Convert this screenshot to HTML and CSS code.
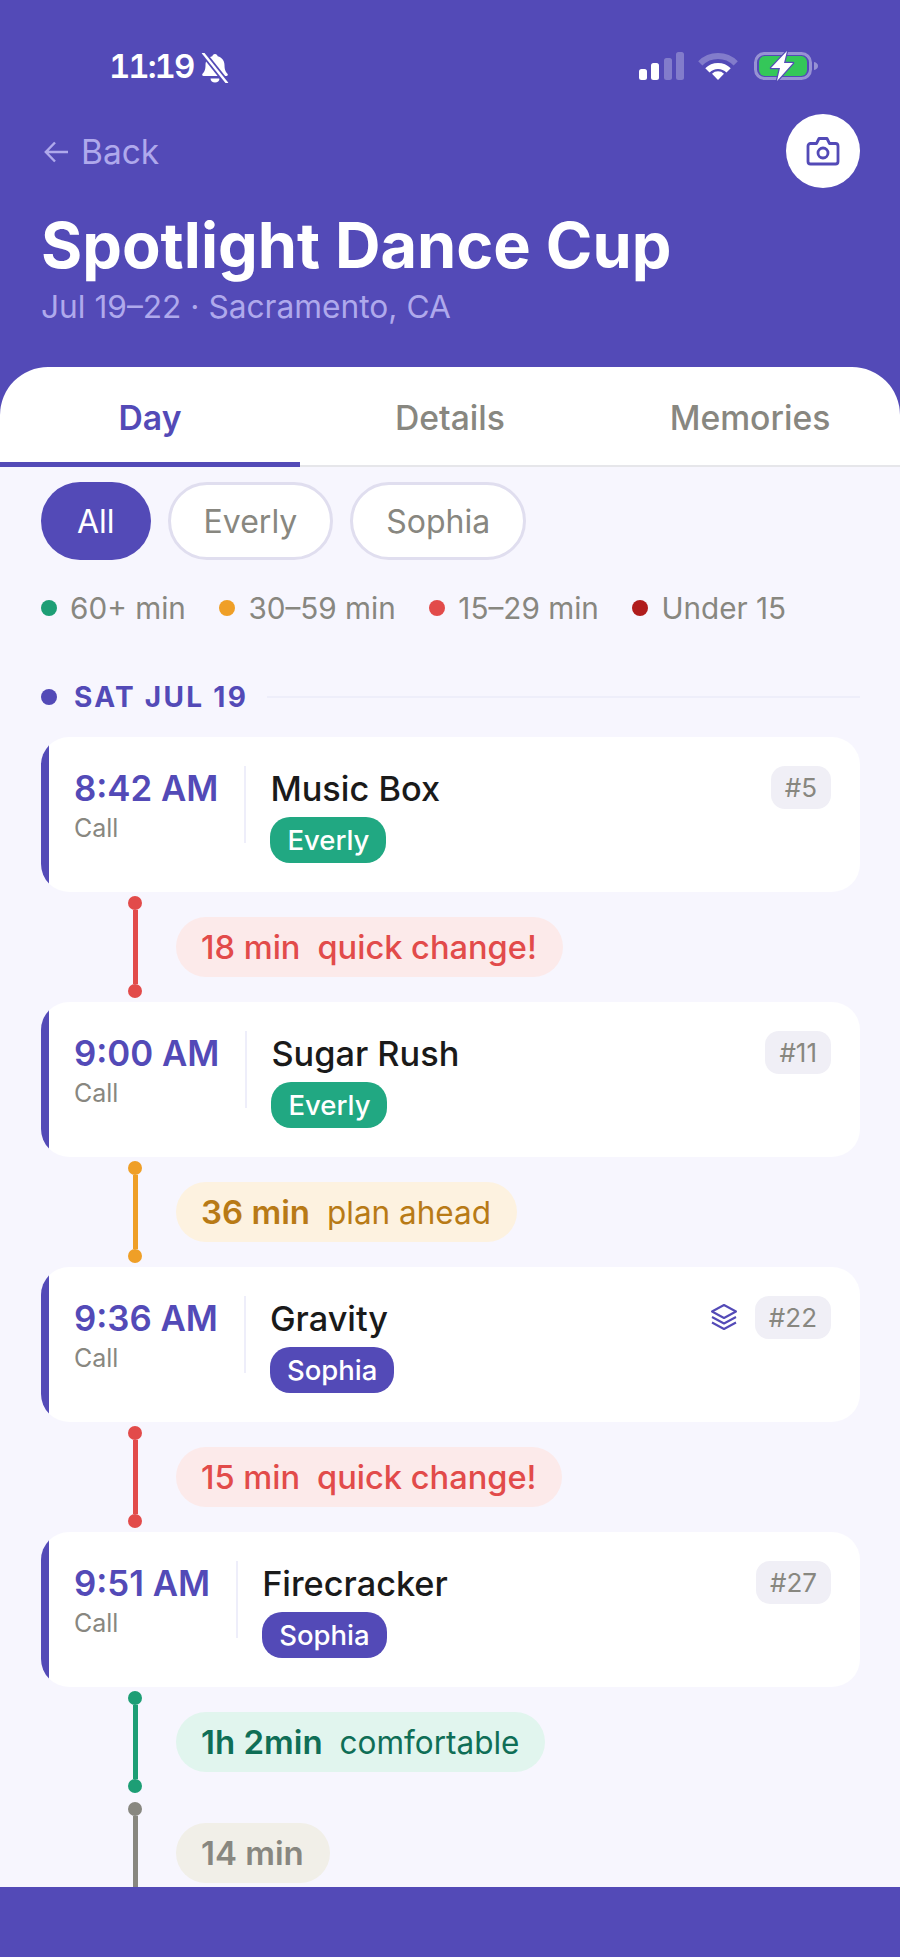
FILE: index.html
```html
<!DOCTYPE html>
<html lang="en">
<head>
    <meta charset="UTF-8">
    <meta name="viewport" content="width=device-width, initial-scale=1.0">
    <title>Spotlight Dance Cup</title>
    <link rel="stylesheet" href="styles.css">
</head>
<body>
    <div class="app">
        <header class="header">
            <div class="status-bar">
                <div class="status-left">
                    <span class="clock">11:19</span>
                    <svg class="bell" viewBox="0 0 30 30" width="30" height="30">
                        <path d="M15 1c1.500 0 2.500 1 2.700 2.300 4.300 1.100 6.800 4.500 6.800 8.900 0 5 1.500 6.800 3 8.600.7.900.2 2.200-1.100 2.200H3.600c-1.300 0-1.800-1.300-1.100-2.200 1.500-1.800 3-3.600 3-8.600 0-4.400 2.500-7.800 6.800-8.900C12.500 2 13.500 1 15 1z" fill="#fff"/>
                        <path d="M10.500 25.500h9c0 2.400-2 4-4.500 4s-4.500-1.600-4.500-4z" fill="#fff"/>
                        <path d="M3 0l24 30" stroke="#534ab7" stroke-width="6"/>
                        <path d="M3 0l24 30" stroke="#fff" stroke-width="2.400" stroke-linecap="round"/>
                    </svg>
                </div>
                <div class="status-right">
                    <svg viewBox="0 0 46 28" width="46" height="28">
                        <rect x="0" y="17" width="8" height="11" rx="2.500" fill="#fff"/>
                        <rect x="12" y="11" width="8" height="17" rx="2.500" fill="#fff"/>
                        <rect x="25" y="6" width="8" height="22" rx="2.500" fill="#fff" opacity=".28"/>
                        <rect x="37" y="0" width="8" height="28" rx="2.500" fill="#fff" opacity=".28"/>
                    </svg>
                    <svg viewBox="0 0 40 28" width="40" height="28">
                        <path d="M2.300 11.300A25 25 0 0 1 37.700 11.300" fill="none" stroke="#fff" stroke-width="6" opacity=".28"/>
                        <path d="M9.400 18.400A15 15 0 0 1 30.600 18.400" fill="none" stroke="#fff" stroke-width="6"/>
                        <path d="M20 28l-6-6.200a8.500 8.500 0 0 1 12 0z" fill="#fff"/>
                    </svg>
                    <svg class="battery" viewBox="0 0 66 32" width="66" height="32">
                        <rect x="2.500" y="3.500" width="55" height="25" rx="9" fill="none" stroke="#fff" stroke-width="3" opacity=".4"/>
                        <rect x="6" y="6" width="48" height="20" rx="6" fill="#34c759"/>
                        <path d="M61 12c2.500.5 4 2 4 4s-1.500 3.500-4 4z" fill="#fff" opacity=".4"/>
                        <path d="M34 1L18 18h9l-3 13 16-18h-9z" fill="#fff" stroke="#534ab7" stroke-width="2.500" stroke-linejoin="round" paint-order="stroke"/>
                    </svg>
                </div>
            </div>

            <div class="nav-row">
                <a class="back">
                    <svg viewBox="0 0 26 26" width="26" height="26">
                        <path d="M24 13H2M11 3.500L1.800 13l9.200 9.500" fill="none" stroke="#afa9ec" stroke-width="2.400"/>
                    </svg>
                    Back
                </a>
                <div class="camera-btn">
                    <svg viewBox="0 0 34 30" width="34" height="30">
                        <path d="M4.500 7.500h6l2.500-5h8l2.500 5h6a2.500 2.500 0 0 1 2.500 2.500v15.500a2.500 2.500 0 0 1-2.500 2.500h-25A2.500 2.500 0 0 1 2 25.500V10a2.500 2.500 0 0 1 2.500-2.500z" fill="none" stroke="#534ab7" stroke-width="2.800" stroke-linejoin="round"/>
                        <circle cx="17" cy="17" r="5" fill="none" stroke="#534ab7" stroke-width="2.800"/>
                    </svg>
                </div>
            </div>

            <h1 class="title">Spotlight Dance Cup</h1>
            <div class="subtitle">Jul 19–22 · Sacramento, CA</div>

            <nav class="tabs">
                <div class="tab active">Day</div>
                <div class="tab">Details</div>
                <div class="tab">Memories</div>
            </nav>
        </header>

        <main class="content">
            <div class="pills">
                <div class="pill selected">All</div>
                <div class="pill">Everly</div>
                <div class="pill">Sophia</div>
            </div>

            <div class="legend">
                <div class="legend-item"><span class="dot green"></span>60+ min</div>
                <div class="legend-item"><span class="dot orange"></span>30–59 min</div>
                <div class="legend-item"><span class="dot red"></span>15–29 min</div>
                <div class="legend-item"><span class="dot darkred"></span>Under 15</div>
            </div>

            <div class="date-row">
                <span class="dot purple"></span>
                <span class="date-label">SAT JUL 19</span>
                <span class="date-line"></span>
            </div>

            <div class="card">
                <div class="time-col">
                    <div class="time">8:42 AM</div>
                    <div class="call">Call</div>
                </div>
                <div class="info">
                    <div class="name">Music Box</div>
                    <span class="badge everly">Everly</span>
                </div>
                <div class="tag">#5</div>
            </div>

            <div class="gap">
                <div class="connector red"><i></i><b></b><i></i></div>
                <div class="chip chip-red"><span class="mins">18 min</span><span class="note">quick change!</span></div>
            </div>

            <div class="card">
                <div class="time-col">
                    <div class="time">9:00 AM</div>
                    <div class="call">Call</div>
                </div>
                <div class="info">
                    <div class="name">Sugar Rush</div>
                    <span class="badge everly">Everly</span>
                </div>
                <div class="tag">#11</div>
            </div>

            <div class="gap">
                <div class="connector orange"><i></i><b></b><i></i></div>
                <div class="chip chip-orange"><span class="mins">36 min</span><span class="note">plan ahead</span></div>
            </div>

            <div class="card">
                <div class="time-col">
                    <div class="time">9:36 AM</div>
                    <div class="call">Call</div>
                </div>
                <div class="info">
                    <div class="name">Gravity</div>
                    <span class="badge sophia">Sophia</span>
                </div>
                <svg class="stack" viewBox="0 0 28 28" width="28" height="28">
                    <path d="M14 2l12 6.500-12 6.500L2 8.500z M2 14l12 6.500L26 14 M2 19.500L14 26l12-6.500" fill="none" stroke="#534ab7" stroke-width="2" stroke-linejoin="round"/>
                </svg>
                <div class="tag">#22</div>
            </div>

            <div class="gap">
                <div class="connector red"><i></i><b></b><i></i></div>
                <div class="chip chip-red"><span class="mins">15 min</span><span class="note">quick change!</span></div>
            </div>

            <div class="card">
                <div class="time-col">
                    <div class="time">9:51 AM</div>
                    <div class="call">Call</div>
                </div>
                <div class="info">
                    <div class="name">Firecracker</div>
                    <span class="badge sophia">Sophia</span>
                </div>
                <div class="tag">#27</div>
            </div>

            <div class="gap">
                <div class="connector green"><i></i><b></b><i></i></div>
                <div class="chip chip-green"><span class="mins">1h 2min</span><span class="note">comfortable</span></div>
            </div>

            <div class="gap last">
                <div class="connector grey"><i></i><b></b><i></i></div>
                <div class="chip chip-grey"><span class="mins">14 min</span></div>
            </div>
        </main>

        <footer class="footer"></footer>
    </div>
</body>
</html>
```

FILE: styles.css
```css
* {
    box-sizing: border-box;
}

body {
    margin: 0;
    font-family: Inter, "Liberation Sans", sans-serif;
    background-color: #534ab7;
}

.app {
    display: flex;
    flex-direction: column;
    width: 900px;
    height: 1957px;
    overflow: hidden;
    background-color: #f7f6fe;
}

/* Purple header */
.header {
    flex: none;
    padding-top: 50px;
    background-color: #534ab7;
}

.status-bar {
    display: flex;
    justify-content: space-between;
    align-items: center;
    height: 32px;
    padding: 0 81px 0 109px;
}

.status-left {
    display: flex;
    align-items: center;
    gap: 7px;
}

.clock {
    font-size: 33px;
    font-weight: 600;
    font-variant-numeric: tabular-nums;
    letter-spacing: -2px;
    color: #fff;
    line-height: 32px;
}

.bell {
    margin-top: 3px;
}

.status-right {
    display: flex;
    align-items: center;
    gap: 13px;
}

.battery {
    margin-left: 2px;
}

.nav-row {
    display: flex;
    justify-content: space-between;
    align-items: center;
    margin-top: 32px;
    padding: 0 40px 0 44px;
}

.back {
    display: flex;
    align-items: center;
    gap: 11px;
    padding-top: 2px;
    font-size: 33.500px;
    color: #afa9ec;
}

.camera-btn {
    display: flex;
    justify-content: center;
    align-items: center;
    width: 74px;
    height: 74px;
    border-radius: 50%;
    background-color: #fff;
}

.title {
    margin: 23px 0 0;
    padding-left: 41px;
    font-size: 63px;
    line-height: 68px;
    font-weight: 700;
    color: #fff;
}

.subtitle {
    margin-top: 8px;
    padding-left: 41px;
    font-size: 31.700px;
    line-height: 40px;
    color: #afa9ec;
}

.tabs {
    display: flex;
    height: 100px;
    margin-top: 40px;
    background-color: #fff;
    border-radius: 48px 48px 0 0;
    border-bottom: 2px solid #e6e6ea;
}

.tab {
    flex: 1;
    display: flex;
    justify-content: center;
    align-items: center;
    height: 100px;
    padding-top: 5px;
    font-size: 33.700px;
    font-weight: 500;
    color: #888780;
    border-bottom: 5px solid transparent;
}

.tab.active {
    font-weight: 600;
    color: #534ab7;
    border-bottom-color: #534ab7;
}

/* Scrolling area */
.content {
    flex: 1;
    min-height: 0;
    overflow: hidden;
    padding: 15px 40px 0 41px;
}

.pills {
    display: flex;
    gap: 17px;
}

.pill {
    display: flex;
    align-items: center;
    height: 78px;
    padding: 0 33px;
    border: 3px solid #e0deef;
    border-radius: 39px;
    background-color: #fff;
    font-size: 32px;
    color: #888780;
}

.pill.selected {
    padding: 0 36px;
    border: none;
    background-color: #534ab7;
    color: #fff;
}

.legend {
    display: flex;
    gap: 33.500px;
    margin-top: 30px;
    line-height: 36px;
    font-size: 29.700px;
    color: #888780;
}

.legend-item {
    display: flex;
    align-items: center;
    gap: 13px;
}

.dot {
    flex: none;
    width: 16px;
    height: 16px;
    border-radius: 50%;
}

.dot.green { background-color: #1d9e75; }
.dot.orange { background-color: #ef9f27; }
.dot.red { background-color: #e24b4a; }
.dot.darkred { background-color: #b01c1c; }
.dot.purple { background-color: #534ab7; }

.date-row {
    display: flex;
    align-items: center;
    margin-top: 54px;
    height: 34px;
}

.date-label {
    margin-left: 17px;
    font-size: 28px;
    font-weight: 700;
    letter-spacing: 2.300px;
    color: #534ab7;
}

.date-line {
    flex: 1;
    height: 2px;
    margin-left: 19px;
    background-color: #eeeefa;
}

/* Performance cards */
.card {
    display: flex;
    align-items: flex-start;
    height: 155px;
    padding: 29px 29px 29px 33px;
    border-radius: 28px;
    background: linear-gradient(to right, #534ab7 8px, #fff 8px);
}

.date-row + .card {
    margin-top: 23px;
}

.time-col {
    flex: none;
    padding-right: 26px;
    border-right: 2px solid #eeeefa;
}

.time {
    font-size: 34.800px;
    line-height: 44px;
    font-weight: 600;
    color: #534ab7;
}

.call {
    margin: 2px 0 -2px;
    font-size: 25px;
    line-height: 33px;
    color: #888780;
}

.info {
    flex: 1;
    padding: 2px 0 0 24px;
}

.name {
    font-size: 34.300px;
    line-height: 42px;
    font-weight: 500;
    color: #1a1a1a;
}

.badge {
    display: inline-block;
    margin-top: 7px;
    padding: 0 17px;
    font-size: 27.500px;
    line-height: 46px;
    font-weight: 500;
    color: #fff;
    border-radius: 20px;
}

.badge.everly { background-color: #21a882; }
.badge.sophia { background-color: #534ab7; }

.tag {
    flex: none;
    padding: 0 14px;
    font-size: 26px;
    line-height: 43px;
    color: #888780;
    background-color: #f0eff6;
    border-radius: 14px;
}

.stack {
    flex: none;
    margin: 7px 17px 0 0;
}

/* Gaps between cards */
.gap {
    display: flex;
    align-items: center;
    gap: 34px;
    height: 110px;
    padding: 4px 0 4px 87px;
}

.gap.last {
    margin-top: 1px;
}

.connector {
    display: flex;
    flex-direction: column;
    align-items: center;
    width: 14px;
    height: 102px;
}

.connector i {
    flex: none;
    width: 14px;
    height: 14px;
    border-radius: 50%;
}

.connector b {
    flex: 1;
    width: 5px;
}

.connector.red i, .connector.red b { background-color: #e24b4a; }
.connector.orange i, .connector.orange b { background-color: #ef9f27; }
.connector.green i, .connector.green b { background-color: #1d9e75; }
.connector.grey i, .connector.grey b { background-color: #888780; }

.chip {
    display: flex;
    align-items: center;
    gap: 17px;
    height: 60px;
    padding: 0 26px 0 25px;
    border-radius: 30px;
    font-size: 31.500px;
}

.mins {
    font-size: 33px;
    font-weight: 600;
}

.chip-red {
    background-color: #fceaea;
    color: #e24b4a;
}

.chip-red .mins, .chip-red .note {
    font-size: 32.600px;
    font-weight: 500;
}

.chip-orange {
    background-color: #fdf2e0;
    color: #b87a16;
}

.chip-green {
    background-color: #e1f5ee;
    color: #0f6e56;
}

.chip-grey {
    background-color: #f1efe8;
    color: #888780;
}

.footer {
    flex: none;
    height: 70px;
    background-color: #534ab7;
}
```
